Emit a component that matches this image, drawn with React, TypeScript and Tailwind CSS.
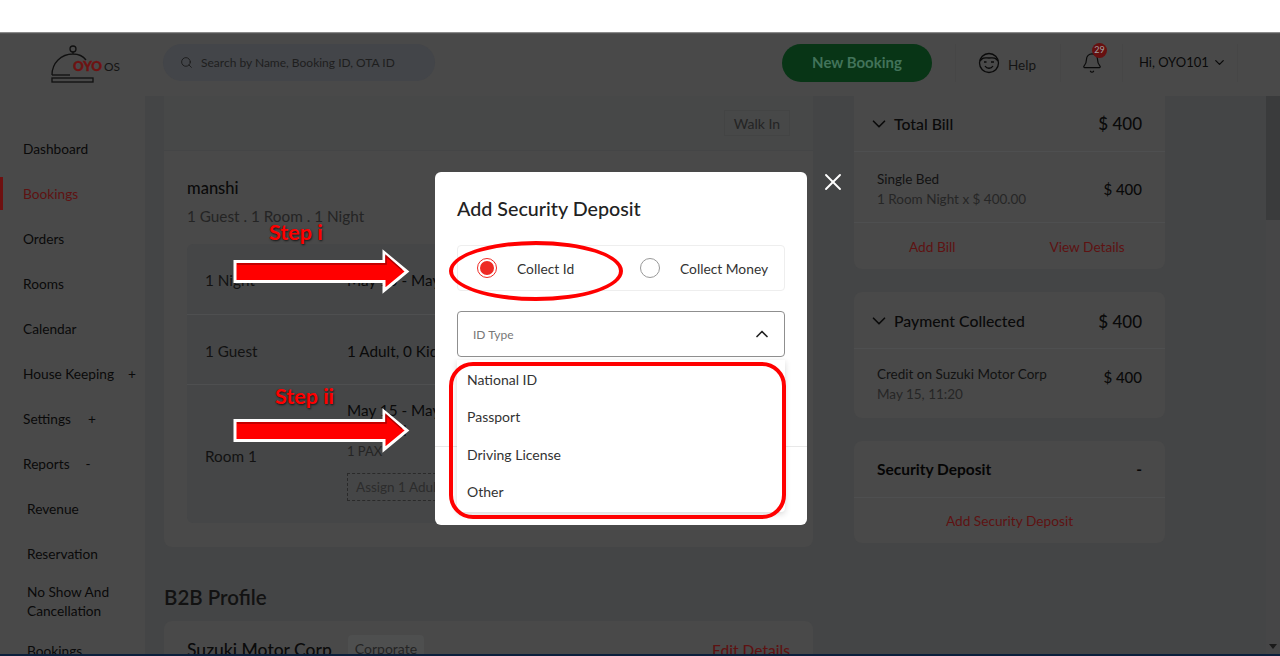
import { ChevronDown, ChevronUp, Search, Bell, X } from "lucide-react";

const font = { fontFamily: '"Lato", "Open Sans", sans-serif' };

const sideItems = [
  { label: "Dashboard" },
  { label: "Bookings", active: true },
  { label: "Orders" },
  { label: "Rooms" },
  { label: "Calendar" },
  { label: "House Keeping", extra: "+", gap: "ml-[14px]" },
  { label: "Settings", extra: "+", gap: "ml-[17px]" },
  { label: "Reports", extra: "-", gap: "ml-[16px]" },
];

const subItems = ["Revenue", "Reservation"];
const idTypes = ["National ID", "Passport", "Driving License", "Other"];

function Sidebar() {
  return (
    <aside className="w-[145px] shrink-0 bg-[#494949] pt-[31px] text-[13.7px] text-[#0a0a0a]">
      {sideItems.map((item) => (
        <div key={item.label} className="relative flex h-[45px] items-center pl-[23px]">
          {item.active && <span className="absolute left-0 top-[5px] h-[33px] w-[3px] bg-[#6e1010]" />}
          <span className={item.active ? "text-[#5e1212]" : ""}>{item.label}</span>
          {item.extra && <span className={item.gap}>{item.extra}</span>}
        </div>
      ))}
      {subItems.map((item) => (
        <div key={item} className="flex h-[45px] items-center pl-[27px]">
          {item}
        </div>
      ))}
      <div className="h-[52px] pl-[27px] pt-[5px] leading-[19px]">
        No Show And
        <br />
        Cancellation
      </div>
      <div className="flex h-[45px] items-center pl-[27px]">Bookings</div>
    </aside>
  );
}

function Header() {
  return (
    <header className="flex h-[62px] shrink-0 items-center bg-[#494949] pb-[5px] pl-[50px]">
      <svg width="72" height="40" viewBox="0 0 72 40" className="mr-[41px] shrink-0">
        <g fill="none" stroke="#101010" strokeWidth="1.3">
          <circle cx="23" cy="6" r="3" />
          <path d="M23 9v2M2 32C2 20 11 11 23 11c6 0 10 2 13 6" />
          <path d="M2 32h18" />
          <rect x="2" y="35" width="41" height="4" />
        </g>
        <text x="23" y="28" fontSize="14" fontWeight="900" fill="#6e1212" stroke="#6e1212" strokeWidth="0.4" textLength="29" lengthAdjust="spacingAndGlyphs">
          OYO
        </text>
        <text x="54" y="28" fontSize="12" fill="#141414" textLength="16" lengthAdjust="spacingAndGlyphs">
          OS
        </text>
      </svg>
      <div className="flex h-[37px] w-[272px] items-center rounded-full bg-[#434549] pl-[17px] text-[12px] text-[#1e1e1e]">
        <Search size={13} strokeWidth={1.6} className="mr-[8px] text-[#181818]" />
        Search by Name, Booking ID, OTA ID
      </div>
      <div className="ml-[347px] flex h-[38px] w-[150px] items-center justify-center rounded-full bg-[#083516] text-[15px] font-bold text-[#42735a]">
        New Booking
      </div>
      <div className="ml-[23px] h-[38px] w-px bg-[#464646]" />
      <svg width="22" height="22" viewBox="0 0 22 22" fill="none" stroke="#0a0a0a" strokeWidth="1.3" className="ml-[22px]">
        <circle cx="11" cy="11" r="9.5" />
        <path d="M2 9c3-4 5-3 9-3s6-1 9 3M6 10h2.5M13 10h3M7 14c2 3 6 3 8 0" />
      </svg>
      <span className="ml-[8px] mt-[5px] text-[13.5px] text-[#141414]">Help</span>
      <div className="ml-[24px] h-[38px] w-px bg-[#464646]" />
      <div className="relative ml-[20px] w-[21px]">
        <Bell size={22} strokeWidth={1.3} className="text-[#0a0a0a]" />
        <span className="absolute left-[11px] top-[-9px] flex h-[15px] w-[15px] items-center justify-center rounded-full bg-[#661010] text-[9px] text-[#a0a0a0]">
          29
        </span>
      </div>
      <div className="ml-[20px] h-[38px] w-px bg-[#464646]" />
      <span className="ml-[16px] text-[13px] text-[#0a0a0a]">Hi, OYO101</span>
      <ChevronDown size={15} strokeWidth={2} className="ml-[3px] text-[#0a0a0a]" />
      <div className="ml-[10px] h-[38px] w-px bg-[#464646]" />
    </header>
  );
}

function BookingRow({ title, height, children }: { title: string; height: string; children: React.ReactNode }) {
  return (
    <div className={`flex items-center border-b border-[#4e4f50] pl-[18px] pt-[3px] ${height}`}>
      <span className="w-[142px] shrink-0 text-[15.3px] text-[#121212]">{title}</span>
      <div className="text-[15.3px] text-[#0a0a0a]">{children}</div>
    </div>
  );
}

function MainColumn() {
  return (
    <main className="ml-[19px] w-[649px] shrink-0">
      <div className="flex h-[54px] items-center justify-end bg-[#474848] pr-[23px]">
        <span className="flex h-[26px] w-[66px] items-center justify-center border border-[#434444] text-[14px] text-[#242424]">
          Walk In
        </span>
      </div>
      <section className="mt-px h-[396px] rounded-b-lg bg-[#494949] px-[23px] pt-[26px]">
        <h2 className="text-[16.5px] font-medium leading-[22px] text-[#0a0a0a]">manshi</h2>
        <p className="mt-[7px] text-[15.3px] leading-[20px] text-[#242424]">1 Guest . 1 Room . 1 Night</p>
        <div className="mt-[18px] h-[279px] rounded-md bg-[#454647]">
          <BookingRow title="1 Night" height="h-[71px]">
            May 15 - May 16
          </BookingRow>
          <BookingRow title="1 Guest" height="h-[70px]">
            1 Adult, 0 Kids
          </BookingRow>
          <div className="flex h-[137px] pl-[18px]">
            <span className="mt-[60px] w-[142px] shrink-0 text-[15.3px] text-[#121212]">Room 1</span>
            <div className="pt-[15px] text-[15.3px] leading-[20px] text-[#0a0a0a]">
              <div>May 15 - May 16</div>
              <div>Standard</div>
              <div className="pt-[1px] text-[13px] text-[#242424]">1 PAX</div>
              <div className="mt-[12px] flex h-[28px] w-[160px] items-center border border-dashed border-[#2a2a2a] pl-[8px] text-[13.5px] text-[#2c2c2c]">
                Assign 1 Adult
              </div>
            </div>
          </div>
        </div>
      </section>
      <h2 className="mt-[37px] text-[20.5px] font-semibold leading-[26px] text-[#121212]">B2B Profile</h2>
      <section className="mt-[11px] flex h-[60px] justify-between rounded-t-lg bg-[#494949] px-[23px] pt-[14px]">
        <div className="flex items-start">
          <span className="mt-[3px] text-[17.5px] font-medium leading-[24px] text-[#0a0a0a]">Suzuki Motor Corp</span>
          <span className="ml-[16px] rounded-sm bg-[#4e4f4f] px-[7px] py-[6px] text-[14px] leading-[16px] text-[#242424]">
            Corporate
          </span>
        </div>
        <span className="mt-[4px] text-[15.5px] font-medium leading-[22px] text-[#5e1212]">Edit Details</span>
      </section>
    </main>
  );
}

function BillHeader({ title, amount, height }: { title: string; amount: string; height: string }) {
  return (
    <div className={`flex items-center border-b border-[#4e4f50] pl-[14px] pr-[23px] ${height}`}>
      <ChevronDown size={22} strokeWidth={1.8} className="text-[#0a0a0a]" />
      <span className="ml-[4px] text-[15.8px] font-medium text-[#0a0a0a]">{title}</span>
      <span className="ml-auto mt-[1px] text-[17px] font-medium text-[#0a0a0a]">{amount}</span>
    </div>
  );
}

function BillDetail({ title, sub, amount, boxClass, amountClass }: { title: string; sub: string; amount: string; boxClass: string; amountClass: string }) {
  return (
    <div className={`flex h-[70px] items-center px-[23px] ${boxClass}`}>
      <div className="text-[13.5px] leading-[20px]">
        <div className="text-[#121212]">{title}</div>
        <div className="text-[#262626]">{sub}</div>
      </div>
      <span className={`ml-auto text-[15px] font-medium text-[#0a0a0a] ${amountClass}`}>{amount}</span>
    </div>
  );
}

function RightColumn() {
  return (
    <aside className="ml-[41px] w-[311px] shrink-0">
      <section className="h-[173px] rounded-b-lg bg-[#494949]">
        <BillHeader title="Total Bill" amount="$ 400" height="h-[56px]" />
        <div className="border-b border-[#4e4f50]">
          <BillDetail title="Single Bed" sub="1 Room Night x $ 400.00" amount="$ 400" boxClass="pt-[3px]" amountClass="mt-[2px]" />
        </div>
        <div className="flex h-[45px] items-center pt-[4px] text-[13.7px] text-[#5e1212]">
          <span className="ml-[55px]">Add Bill</span>
          <span className="ml-[94px]">View Details</span>
        </div>
      </section>
      <section className="mt-[23px] h-[126px] rounded-lg bg-[#494949]">
        <BillHeader title="Payment Collected" amount="$ 400" height="h-[57px] pt-[2px]" />
        <BillDetail title="Credit on Suzuki Motor Corp" sub="May 15, 11:20" amount="$ 400" boxClass="" amountClass="mb-[14px]" />
      </section>
      <section className="mt-[23px] h-[102px] rounded-lg bg-[#494949]">
        <div className="flex h-[57px] items-center justify-between border-b border-[#4e4f50] px-[23px] pt-[2px] text-[15.5px] font-bold text-[#050505]">
          <span>Security Deposit</span>
          <span>-</span>
        </div>
        <div className="flex h-[45px] items-center justify-center pt-[2px] text-[13.7px] text-[#5e1212]">Add Security Deposit</div>
      </section>
    </aside>
  );
}

function Modal() {
  return (
    <div className="absolute left-[435px] top-[172px] h-[353px] w-[372px] rounded-md bg-white px-[22px] pt-[25px] text-[#222]">
      <h3 className="text-[19.7px] font-medium leading-[24px] text-[#222]">Add Security Deposit</h3>
      <div className="mt-[24px] flex h-[46px] items-center rounded border border-[#eeeeee] pl-[19px] text-[13.8px]">
        <span className="flex h-[20px] w-[20px] items-center justify-center rounded-full border border-[#ee2a24]">
          <span className="h-[14px] w-[14px] rounded-full bg-[#ee2a24]" />
        </span>
        <span className="ml-[20px] w-[123px] pt-[2px] text-[#333]">Collect Id</span>
        <span className="h-[20px] w-[20px] rounded-full border-[1.5px] border-[#999]" />
        <span className="ml-[20px] pt-[2px] text-[#333]">Collect Money</span>
      </div>
      <div className="mt-[20px] flex h-[46px] items-center justify-between rounded-sm border border-[#8f8f8f] pl-[15px] pr-[12px] text-[12px] text-[#777]">
        <span className="pt-[2px]">ID Type</span>
        <ChevronUp size={20} strokeWidth={2} className="text-[#222]" />
      </div>
      <div className="absolute left-0 top-[274px] h-px w-full bg-[#e8e8e8]" />
      <ul className="relative mt-[3px] h-[152px] rounded-b bg-white pl-[10px] pt-[0.5px] text-[14px] text-[#333] shadow-[0_2px_6px_rgba(0,0,0,0.16)]">
        {idTypes.map((type) => (
          <li key={type} className="flex h-[37.5px] items-center">
            {type}
          </li>
        ))}
      </ul>
    </div>
  );
}

function Arrow({ className }: { className: string }) {
  return (
    <svg width="178" height="48" viewBox="0 0 178 48" className={className}>
      <path d="M2 13.5H151V4.5L174 23.5L151 42.5V33.5H2Z" fill="#ff0000" stroke="#ffffff" strokeWidth="3" />
      <path d="M4 16H153V8L169 22" fill="none" stroke="#b00000" strokeWidth="1.5" />
    </svg>
  );
}

function Annotations() {
  return (
    <>
      <span className="absolute left-[269px] top-[219px] text-[21.5px] font-bold leading-[26px] text-[#ff0000] [text-shadow:1px_1px_2px_rgba(0,0,0,0.7)]">
        Step i
      </span>
      <span className="absolute left-[275px] top-[383px] text-[21.5px] font-bold leading-[26px] text-[#ff0000] [text-shadow:1px_1px_2px_rgba(0,0,0,0.7)]">
        Step ii
      </span>
      <Arrow className="absolute left-[233px] top-[248px]" />
      <Arrow className="absolute left-[233px] top-[407px]" />
      <div className="absolute left-[449px] top-[241px] h-[60px] w-[174px] rounded-[50%] border-4 border-[#ff0000]" />
      <div className="absolute left-[449px] top-[362px] h-[157px] w-[337px] rounded-[24px] border-4 border-[#ff0000]" />
    </>
  );
}

export default function App() {
  return (
    <div className="relative flex h-[656px] w-[1280px] flex-col overflow-hidden bg-white" style={font}>
      <div className="h-[33px] shrink-0 border-b border-[#8a8a8a]" />
      <div className="h-px shrink-0 bg-[#555]" />
      <Header />
      <div className="flex min-h-0 flex-1 overflow-hidden bg-[#444546]">
        <Sidebar />
        <MainColumn />
        <RightColumn />
        <div className="relative ml-auto w-[14px] shrink-0 bg-[#464647]">
          <div className="h-[124px] w-full bg-[#3a3b3c]" />
          <span className="absolute bottom-[5px] left-[3px] h-0 w-0 border-x-[4px] border-t-[5px] border-x-transparent border-t-[#1a1a1a]" />
        </div>
      </div>
      <div className="h-[2px] shrink-0 bg-[#0b1f3c]" />
      <Modal />
      <X size={28} strokeWidth={1.6} className="absolute left-[819px] top-[168px] text-white" />
      <Annotations />
    </div>
  );
}
